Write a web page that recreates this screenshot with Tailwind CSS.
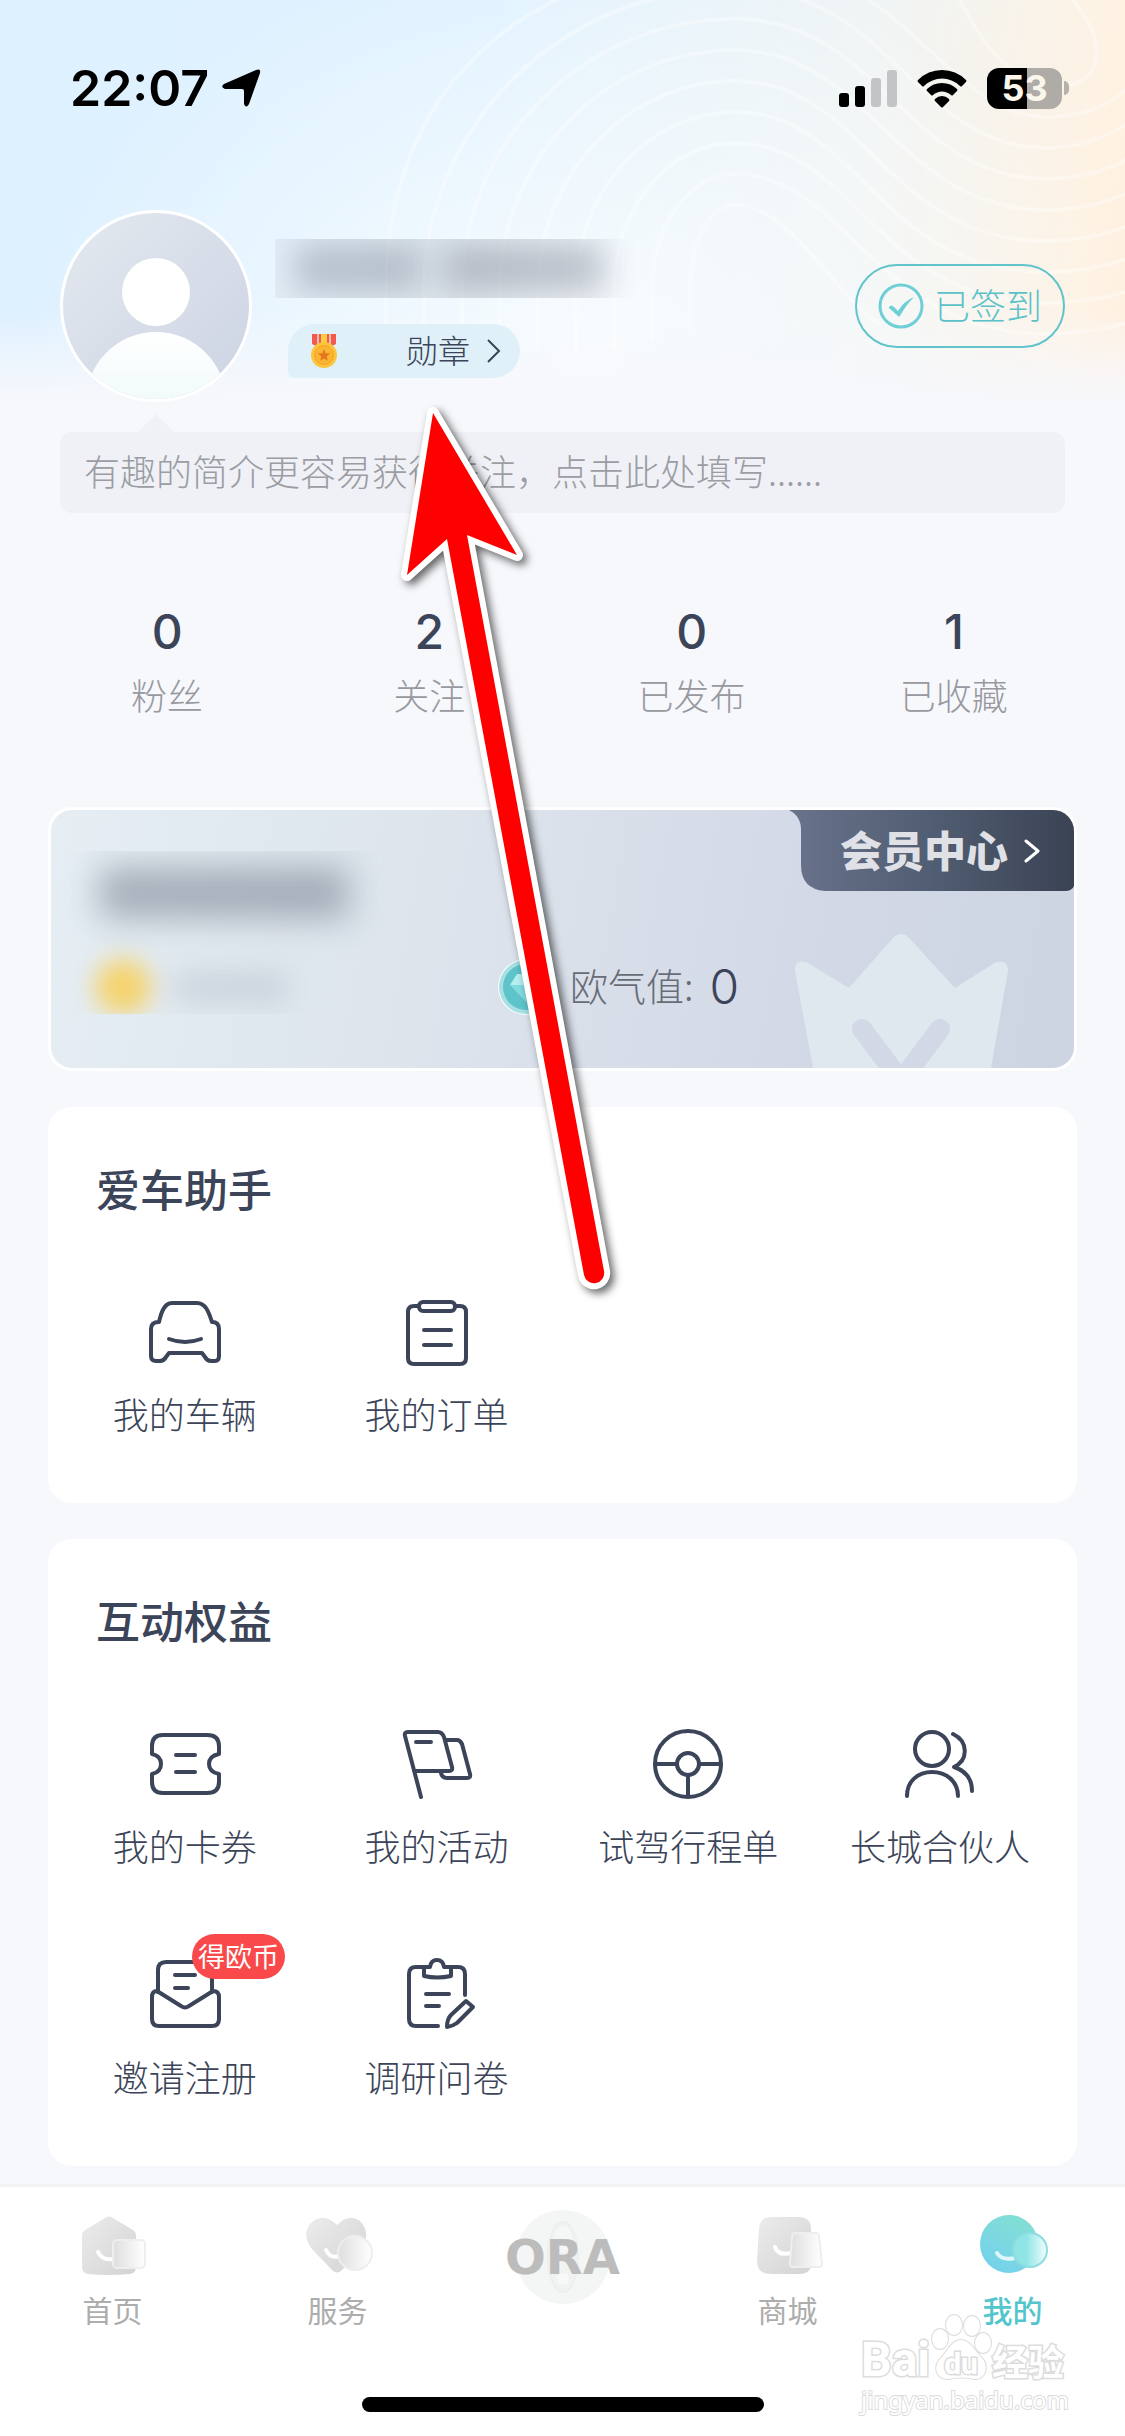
<!DOCTYPE html>
<html lang="zh-CN">
<head>
<meta charset="utf-8">
<meta name="viewport" content="width=device-width, initial-scale=1">
<title>我的</title>
<script src="https://cdn.jsdelivr.net/npm/@tailwindcss/browser@4"></script>
</head>
<body class="bg-[#f7f8fc] text-[#3b4458] font-['Noto_Sans_CJK_SC',sans-serif]">
<div class="relative isolate flex min-h-screen flex-col overflow-hidden">

  <!-- header backdrop -->
  <div class="absolute inset-x-0 top-0 -z-10 h-[400px] bg-[linear-gradient(to_bottom,transparent_78%,#f7f8fc_100%),radial-gradient(ellipse_560px_420px_at_52%_90%,#f8fcfe_0%,#f8fcfe00_100%),linear-gradient(100deg,#def1ff_0%,#e0f2ff_42%,#f0f4f4_74%,#fef2e3_94%,#fff0e0_100%)]" aria-hidden="true">
    <svg class="h-[400px] w-full" viewBox="0 0 1125 400" preserveAspectRatio="none" fill="none" stroke="#fff" stroke-opacity=".34" stroke-width="4">
      <path d="M690 330V290C690 243 710 205 735 205C790 205 830 290 880 325"/>
      <path d="M652 340V290C652 226 689 174 735 174C845 174 876 334 1046 334Q1090 334 1130 322"/>
      <path d="M614 350V290C614 209 668 143 735 143C855 143 876 303 1046 303Q1090 303 1130 291"/>
      <path d="M576 350V290C576 192 648 112 735 112C860 112 876 272 1046 272Q1090 272 1130 258"/>
      <path d="M538 350V290C538 175 627 81 735 81C865 81 886 241 1046 241Q1090 241 1130 225"/>
      <path d="M500 350V290C500 158 606 50 735 50C870 50 896 210 1046 210Q1090 210 1130 192"/>
      <path d="M462 350V290C462 141 585 19 735 19C880 19 906 179 1046 179Q1090 179 1130 158"/>
      <path d="M424 350V290C424 124 564 -12 735 -12C890 -12 916 148 1046 148Q1090 148 1130 122"/>
      <path d="M386 350V290C386 107 500 -30 735 -43C900 -43 946 117 1046 117Q1098 117 1130 86"/>
      <path d="M1072 0Q1100 30 1096 60Q1092 88 1046 86Q1000 80 960 0"/>
    </svg>
  </div>

  <!-- status bar -->
  <div class="flex h-44 items-center justify-between pr-14 pl-[70px] text-black">
    <div class="flex items-center gap-3 font-['Inter'] text-[50px] leading-none font-semibold">
      <span>22:07</span>
      <svg class="size-11" viewBox="0 0 44 44" aria-label="定位"><path d="M35 4Q40 2 39 7L28 38Q25 43 23 38V25Q23 23 21 23H4Q-1 21 3 18Z"/></svg>
    </div>
    <div class="flex items-center gap-5">
      <svg class="h-10 w-[58px]" viewBox="0 0 58 40" aria-label="信号"><rect y="25" width="10" height="14" rx="3"/><rect x="16" y="18" width="10" height="21" rx="3"/><g fill="#c2c4c5"><rect x="32" y="10" width="10" height="29" rx="3"/><rect x="48" y="2" width="10" height="37" rx="3"/></g></svg>
      <svg class="h-10 w-[50px]" viewBox="0 0 50 40" aria-label="无线网络"><path d="M25 2Q39 2 49 12Q50 13 49 14L45 18Q44 19 43 18Q35 10.500 25 10.500T7 18Q6 19 5 18L1 14Q0 13 1 12Q11 2 25 2ZM25 15Q34 15 40 21Q41 22 40 23L36 27Q35 28 34 27Q30 23.500 25 23.500T16 27Q15 28 14 27L10 23Q9 22 10 21Q16 15 25 15ZM25 28Q29 28 32 31Q33 32 32 33L26 39Q25 40 24 39L18 33Q17 32 18 31Q21 28 25 28Z"/></svg>
      <div class="flex items-center gap-[2px]" aria-label="电量 53%">
        <div class="flex h-[41px] w-[75px] items-center justify-center rounded-xl bg-[linear-gradient(to_right,#000_53%,#afaca7_53%)] font-['Inter'] text-[36px] leading-none font-bold text-[#fbf6ec]">53</div>
        <div class="h-3.5 w-[5px] rounded-r-full bg-[#b5b2ad]"></div>
      </div>
    </div>
  </div>

  <!-- profile -->
  <header class="mx-[60px] mt-[34px] flex items-center">
    <svg class="size-48 shrink-0" viewBox="0 0 192 192" role="img" aria-label="头像">
      <defs>
        <linearGradient id="av" x1="0" y1="0" x2="1" y2="1"><stop stop-color="#e4e9f0"/><stop offset="1" stop-color="#ccd3e2"/></linearGradient>
        <linearGradient id="bd" x1="0" y1="0" x2="0" y2="1"><stop stop-color="#fff"/><stop offset=".6" stop-color="#eef9fa"/></linearGradient>
        <clipPath id="avc"><circle cx="96" cy="96" r="93"/></clipPath>
      </defs>
      <circle cx="96" cy="96" r="96" fill="#fff"/>
      <g clip-path="url(#avc)"><rect width="192" height="192" fill="url(#av)"/><circle cx="96" cy="82" r="34" fill="#fff"/><circle cx="96" cy="192" r="70" fill="url(#bd)"/></g>
    </svg>
    <div class="ml-[23px] flex flex-col items-start gap-[26px] pt-1">
      <!-- masked nickname -->
      <div class="flex h-[59px] w-[360px] items-center gap-5 overflow-hidden bg-gradient-to-r from-gray-400/10 via-gray-400/20 to-transparent pl-5" aria-label="昵称">
        <span class="h-12 w-32 bg-[#8c96a5]/50 blur-[16px]"></span>
        <span class="h-12 w-40 bg-[#8c90a0]/50 blur-[16px]"></span>
      </div>
      <button class="ml-[13px] flex h-[54px] w-[232px] items-center justify-between rounded-l-[27px] rounded-r-[27px] rounded-bl-md bg-[#dff0f8] pr-[19px] pl-[22px]">
        <svg class="h-[34px] w-7" viewBox="0 0 28 34" aria-hidden="true"><path fill="#f35a4f" d="M2 0h24v10l-6 3H8l-6-3Z"/><path fill="#fbb9a8" d="M7 0h2v12H7zM19 0h2v12h-2z"/><path fill="#fccb46" d="M11 0h6v12h-6z"/><circle cx="14" cy="21" r="13" fill="#fdc53b"/><circle cx="14" cy="21" r="9.500" fill="#fbb532" stroke="#f2a227" stroke-width="1"/><path fill="#e5771f" d="M14 15l1.700 4.200 4.500.300-3.500 2.900 1.100 4.400L14 24.400l-3.800 2.400 1.100-4.400-3.500-2.900 4.500-.300Z"/></svg>
        <span class="flex items-center gap-[17px] text-[32px] leading-none font-light"><span class="pb-1">勋章</span>
          <svg class="h-6 w-3.5" viewBox="0 0 14 24" fill="none" stroke="currentColor" stroke-width="2" aria-hidden="true"><path d="M1 1l11 11L1 23"/></svg>
        </span>
      </button>
    </div>
    <button class="ml-auto flex h-[84px] w-[210px] items-center justify-center gap-2.5 rounded-full border-2 border-[#62c4cb] text-[36px] leading-none font-light text-[#5bc2ca]">
      <svg class="size-[46px]" viewBox="0 0 46 46" aria-hidden="true"><circle cx="23" cy="23" r="21" fill="none" stroke="#6fcfd6" stroke-width="3"/><path fill="#6fcfd6" d="M11 24q2-3 5 0l4 4Q26 18 36 14Q28 22 22 33q-1 1-2 0L11 25Z"/></svg>
      <span class="pb-1">已签到</span>
    </button>
  </header>

  <div class="relative mx-[60px] mt-[30px]">
    <span class="absolute -top-[18px] left-[78px] h-[18px] w-9 bg-[#f0f1f6] [clip-path:polygon(50%_0,100%_100%,0_100%)]"></span>
    <input type="text" aria-label="个人简介" placeholder="有趣的简介更容易获得关注，点击此处填写......" class="block h-[81px] w-full rounded-xl bg-[#f0f1f6] px-6 pb-1.5 text-[36px] font-light placeholder:text-[#9b9da3]">
  </div>

  <!-- counters -->
  <ul class="mr-10 ml-9 mt-[91px] grid grid-cols-4 text-center">
    <li class="flex flex-col gap-2.5"><span class="font-['Inter'] text-[48px] leading-[56px] font-medium">0</span><span class="text-[36px] leading-[48px] font-light text-[#98999f]">粉丝</span></li>
    <li class="flex flex-col gap-2.5"><span class="font-['Inter'] text-[48px] leading-[56px] font-medium">2</span><span class="text-[36px] leading-[48px] font-light text-[#98999f]">关注</span></li>
    <li class="flex flex-col gap-2.5"><span class="font-['Inter'] text-[48px] leading-[56px] font-medium">0</span><span class="text-[36px] leading-[48px] font-light text-[#98999f]">已发布</span></li>
    <li class="flex flex-col gap-2.5"><span class="font-['Inter'] text-[48px] leading-[56px] font-medium">1</span><span class="text-[36px] leading-[48px] font-light text-[#98999f]">已收藏</span></li>
  </ul>

  <!-- membership card -->
  <section class="relative mx-12 mt-[89px] flex h-[264px] overflow-hidden rounded-3xl border-3 border-white bg-[linear-gradient(100deg,#e6eef4_0%,#dbe2eb_45%,#d2d8e6_75%,#cdd4e2_100%)]">
    <div class="relative mt-[41px] ml-3 h-[163px] w-[327px] overflow-hidden" aria-label="会员信息">
      <span class="absolute top-4 left-9 h-[52px] w-[250px] bg-[#7d8595]/60 blur-[17px]"></span>
      <span class="absolute top-[108px] left-8 size-14 rounded-full bg-[#f5d36c] blur-[12px]"></span>
      <span class="absolute top-[120px] left-28 h-8 w-28 bg-[#8c94a2]/25 blur-[14px]"></span>
    </div>
    <div class="mb-[53px] ml-[108px] flex items-center self-end">
      <svg class="size-14" viewBox="0 0 56 56" aria-hidden="true"><circle cx="28" cy="28" r="28" fill="#fff"/><circle cx="28" cy="28" r="27" fill="#a6e0e3"/><circle cx="28" cy="28" r="23" fill="#5fc3ca"/><path fill="#b5f0f1" d="M19 15h18l7 11H12Z"/><path fill="#82dbe0" d="M12 26h32L28 43Z"/></svg>
      <span class="ml-4 pb-1 text-[38px] leading-[52px] font-light text-[#686c76]">欧气值:</span>
      <span class="ml-4 font-['Inter'] text-[48px] leading-[56px] font-light">0</span>
    </div>
    <svg class="absolute right-0 bottom-0 h-[135px] w-[280px]" viewBox="0 0 280 135" aria-hidden="true">
      <path fill="#dfe8ef" d="M1 38Q0 26 12 29L55 55L98 6Q107 -4 116 6L161 55L202 29Q214 26 214 38L197 135H19Z"/>
      <path d="M68 96L107 148L146 96" fill="none" stroke="#d2d8e6" stroke-width="20" stroke-linecap="round"/>
    </svg>
    <a href="#member" class="absolute top-0 right-0 isolate flex h-[81px] w-[285px] items-center justify-end pr-[34px] text-white">
      <svg class="absolute inset-0 -z-10 h-full w-full" viewBox="0 0 285 81" aria-hidden="true"><defs><linearGradient id="mc"><stop stop-color="#69738c"/><stop offset=".5" stop-color="#515d72"/><stop offset="1" stop-color="#3a4354"/></linearGradient></defs><path fill="url(#mc)" d="M0 0H285V76Q283 81 276 81H36Q12 79 12 55V20Q12 6 0 0Z"/></svg>
      <span class="pb-1 text-[42px] leading-none font-black text-[#dfe1e6]">会员中心</span>
      <svg class="ml-4 h-6 w-4" viewBox="0 0 16 24" fill="none" stroke="currentColor" stroke-width="3" stroke-linecap="round" stroke-linejoin="round" aria-hidden="true"><path d="M2 2l12 10L2 22"/></svg>
    </a>
  </section>

  <section class="mx-12 mt-9 rounded-3xl bg-white pt-[53px] pb-16">
    <h2 class="px-12 text-[44px] leading-[56px] font-medium">爱车助手</h2>
    <div class="mt-[75px] grid grid-cols-4 gap-y-[83px] px-[11px] text-[36px] leading-[52px] font-light">
      <a href="#car" class="flex flex-col items-center gap-3">
        <svg class="size-[84px]" viewBox="0 0 84 84" fill="none" stroke="currentColor" stroke-width="4" stroke-linecap="round" stroke-linejoin="round" aria-hidden="true"><path d="M29 12H54C63 12 66 22 69 31Q76 31 76 38V65Q76 70 72 70H68Q64 70 62 66L59 62H26L23 66Q21 70 17 70H13Q8 70 8 65V38Q8 31 16 31C18 22 21 12 29 12Z"/><path d="M26 48Q42 54 58 48"/></svg>
        我的车辆</a>
      <a href="#orders" class="flex flex-col items-center gap-3">
        <svg class="size-[84px]" viewBox="0 0 84 84" fill="none" stroke="currentColor" stroke-width="4" stroke-linecap="round" stroke-linejoin="round" aria-hidden="true"><path d="M24 15H19Q13 15 13 21V67Q13 73 19 73H65Q71 73 71 67V21Q71 15 65 15H60"/><rect x="24" y="11" width="36" height="9" rx="4"/><path d="M29 39H56M29 54H56"/></svg>
        我的订单</a>
    </div>
  </section>

  <section class="mx-12 mt-9 rounded-3xl bg-white pt-[53px] pb-16">
    <h2 class="px-12 text-[44px] leading-[56px] font-medium">互动权益</h2>
    <div class="mt-[75px] grid grid-cols-4 gap-y-[83px] px-[11px] text-[36px] leading-[52px] font-light">
      <a href="#coupons" class="flex flex-col items-center gap-3">
        <svg class="size-[84px]" viewBox="0 0 84 84" fill="none" stroke="currentColor" stroke-width="4" stroke-linecap="round" stroke-linejoin="round" aria-hidden="true"><path d="M20 12H64Q76 12 76 23V31Q66 33 66 41T76 51V59Q76 70 64 70H20Q9 70 9 59V51Q18 49 18 41T9 31V23Q9 12 20 12Z"/><path d="M33 32H52M33 49H52"/></svg>
        我的卡券</a>
      <a href="#events" class="flex flex-col items-center gap-3">
        <svg class="size-[84px]" viewBox="0 0 84 84" fill="none" stroke="currentColor" stroke-width="4" stroke-linecap="round" stroke-linejoin="round" aria-hidden="true"><path d="M26 74L10 13Q9 9 13 9H43Q47 9 49 14L57 44Q58 48 54 48H19M21 19H36M50 17H62Q65 17 67 21L75 51Q76 55 72 55H52Q47 55 46 50"/></svg>
        我的活动</a>
      <a href="#test-drive" class="flex flex-col items-center gap-3">
        <svg class="size-[84px]" viewBox="0 0 84 84" fill="none" stroke="currentColor" stroke-width="4" aria-hidden="true"><circle cx="42" cy="41" r="33"/><circle cx="42" cy="41" r="11"/><path d="M9 41H31M53 41H75M42 52V74"/></svg>
        试驾行程单</a>
      <a href="#partner" class="flex flex-col items-center gap-3">
        <svg class="size-[84px]" viewBox="0 0 84 84" fill="none" stroke="currentColor" stroke-width="4" stroke-linecap="round" stroke-linejoin="round" aria-hidden="true"><circle cx="34" cy="26" r="17"/><path d="M9 73C9 58 20 49 34 49S60 58 60 73M55 11C70 18 71 37 56 44Q74 50 74 68"/></svg>
        长城合伙人</a>
      <a href="#invite" class="relative flex flex-col items-center gap-3">
        <svg class="size-[84px]" viewBox="0 0 84 84" fill="none" stroke="currentColor" stroke-width="4" stroke-linecap="round" stroke-linejoin="round" aria-hidden="true"><path d="M15 38V16Q15 8 23 8H61Q69 8 69 16V38"/><path d="M14 37L38 52Q42 55 46 52L70 37Q76 37 76 43V65Q76 72 69 72H16Q9 72 9 65V43Q9 37 14 37ZM32 21H52M32 34H45"/></svg>
        邀请注册
        <span class="absolute -top-5 left-[133px] flex h-[45px] w-[93px] items-center justify-center rounded-full bg-[#f9494b] pb-0.5 text-[27px] leading-none font-normal text-white">得欧币</span>
      </a>
      <a href="#survey" class="flex flex-col items-center gap-3">
        <svg class="size-[84px]" viewBox="0 0 84 84" fill="none" stroke="currentColor" stroke-width="4" stroke-linecap="round" stroke-linejoin="round" aria-hidden="true"><path d="M29 13H21Q14 13 14 20V65Q14 72 21 72H43M56 13H63Q70 13 70 20V41"/><path d="M29 13H35Q36 6 42 6T49 13H56V22Q42 25 29 22ZM31 40H54M31 52H44M52 73Q52 65 56 61L71 47L78 53L62 69Q58 72 52 73Z"/></svg>
        调研问卷</a>
    </div>
  </section>

  <!-- tab bar -->
  <nav class="relative mt-[18px] border-t-3 border-[#f1f2f4] bg-white pb-6">
    <div class="grid grid-cols-5 items-start pt-[26px] text-[30px] leading-10 text-[#adadad]">
      <a href="#home" class="flex flex-col items-center gap-3">
        <svg class="h-16 w-[72px]" viewBox="0 0 72 64" aria-hidden="true"><defs><linearGradient id="g1" x1="0" y1="0" x2="1" y2="1"><stop stop-color="#ececec"/><stop offset="1" stop-color="#d3d3d3"/></linearGradient><linearGradient id="g2"><stop stop-color="#dedede"/><stop offset="1" stop-color="#fff"/></linearGradient></defs><path fill="url(#g1)" d="M28 5Q32 2 36 5L56 17Q59 19 59 23V54Q59 60 53 61Q32 63 11 61Q5 60 5 54V23Q5 19 8 17Z"/><path d="M21 39Q25 48 37 46" fill="none" stroke="#fff" stroke-width="4" stroke-linecap="round"/><rect x="36" y="27" width="32" height="28" rx="4" fill="url(#g2)" stroke="#eee" stroke-width="2"/></svg>
        首页</a>
      <a href="#service" class="flex flex-col items-center gap-3">
        <svg class="h-16 w-[72px]" viewBox="0 0 72 64" aria-hidden="true"><path fill="url(#g1)" d="M35 12Q47 0 58 8Q68 18 62 34L40 57Q35 62 30 57L9 35Q0 22 8 11Q21 -2 35 12Z"/><path d="M24 37Q28 46 38 43" fill="none" stroke="#fff" stroke-width="4" stroke-linecap="round"/><circle cx="53" cy="40" r="17" fill="url(#g2)" stroke="#eee" stroke-width="2"/></svg>
        服务</a>
      <a href="#ora" class="relative -mt-1 flex justify-center" aria-label="ORA">
        <svg class="size-24" viewBox="0 0 96 96" aria-hidden="true"><circle cx="48" cy="48" r="47" fill="#f4f5f5"/><ellipse cx="48" cy="48" rx="15" ry="35" fill="#f1f2f2" stroke="#edeeee" stroke-width="2"/><ellipse cx="48" cy="30" rx="9" ry="13" fill="#f5f6f6"/><circle cx="48" cy="70" r="6" fill="#f8f8f8"/></svg>
        <span class="absolute inset-0 flex items-center justify-center font-['DejaVu_Sans'] text-[48px] leading-none font-bold text-[#bcbcbc]">ORA</span>
      </a>
      <a href="#mall" class="flex flex-col items-center gap-3">
        <svg class="h-16 w-[72px]" viewBox="0 0 72 64" aria-hidden="true"><path fill="url(#g1)" d="M19 4H47Q59 4 59 16L60 48Q60 61 47 61H19Q5 61 5 48L7 16Q8 4 19 4Z"/><path d="M23 34Q26 43 39 40" fill="none" stroke="#fff" stroke-width="4" stroke-linecap="round"/><path fill="url(#g2)" stroke="#eee" stroke-width="2" d="M43 20H64Q67 20 67 23L70 51Q70 54 67 54H41Q38 54 38 51L40 23Q40 20 43 20Z"/></svg>
        商城</a>
      <a href="#me" class="flex flex-col items-center gap-3 font-medium text-[#53c5cd]" aria-current="page">
        <svg class="h-16 w-[72px]" viewBox="0 0 72 64" aria-hidden="true"><defs><linearGradient id="m1" x1=".8" y1="0" x2=".2" y2="1"><stop stop-color="#83e0d3"/><stop offset="1" stop-color="#74d0ec"/></linearGradient><linearGradient id="m2"><stop offset=".4" stop-color="#8fe5e6"/><stop offset="1" stop-color="#f4fdfd"/></linearGradient></defs><circle cx="32" cy="31" r="29" fill="url(#m1)"/><path d="M20 40Q25 48 38 45" fill="none" stroke="#dff6fa" stroke-width="4" stroke-linecap="round"/><circle cx="53" cy="37" r="17" fill="url(#m2)" stroke="#8cdce0" stroke-width="2"/></svg>
        我的</a>
    </div>
    <div class="mx-auto mt-[68px] h-[15px] w-[402px] rounded-full bg-black"></div>

    <!-- watermark -->
    <div class="absolute right-[60px] bottom-5 w-[204px] text-white [paint-order:stroke_fill] [-webkit-text-stroke:3px_#dcdcdc]" aria-hidden="true">
      <div class="flex h-[60px] items-end">
        <span class="font-['Roboto'] text-[48px] leading-[48px] font-bold">Bai</span>
        <span class="relative flex h-[72px] w-[62px] shrink-0 items-end justify-center">
          <svg class="absolute inset-0 h-[72px] w-[62px]" viewBox="0 0 62 72" fill="#fff" stroke="#dcdcdc" stroke-width="2"><ellipse cx="10" cy="27" rx="8" ry="10"/><ellipse cx="24" cy="13" rx="8" ry="10"/><ellipse cx="42" cy="14" rx="8" ry="10"/><ellipse cx="53" cy="31" rx="8" ry="10"/><path d="M31 28C40 28 44 38 51 45C60 54 55 68 45 67Q31 64 18 67C6 67 2 54 12 45C18 38 22 28 31 28Z"/></svg>
          <span class="relative font-['Roboto'] text-[30px] leading-[40px] font-bold">du</span>
        </span>
        <span class="text-[36px] leading-[48px] font-bold">经验</span>
      </div>
      <div class="font-['Noto_Sans'] text-[24px] leading-8 [-webkit-text-stroke:2px_#dcdcdc]">jingyan.baidu.com</div>
    </div>
  </nav>

  <!-- pointer arrow -->
  <svg class="pointer-events-none absolute top-[400px] left-[390px] h-[910px] w-[240px] drop-shadow-[4px_4px_4px_rgba(0,0,0,0.6)]" viewBox="390 400 240 910" aria-hidden="true"><path d="M433 413L517 555L467 535L604 1271A10 10 0 0 1 584 1275L447 539L407 575Z" fill="#f00" stroke="#fff" stroke-width="12" stroke-linejoin="round" paint-order="stroke"/></svg>
</div>
</body>
</html>
